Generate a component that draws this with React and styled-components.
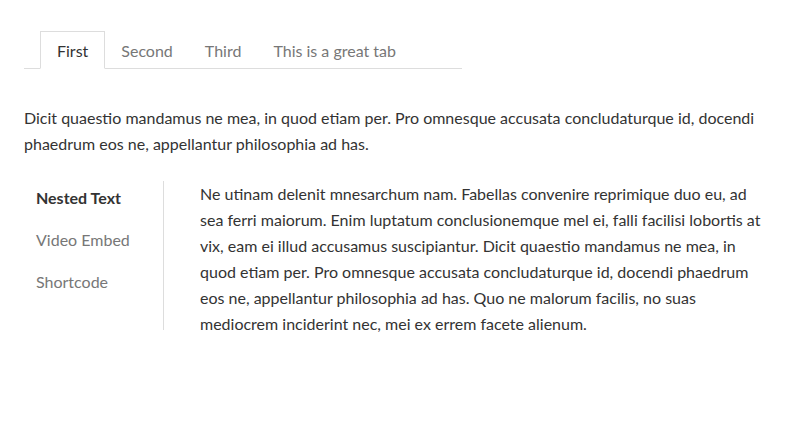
import React, { useState } from 'react'
import styled, { createGlobalStyle } from 'styled-components'

const GlobalStyle = createGlobalStyle`
  html, body {
    margin: 0;
    padding: 0;
    background: #fff;
  }
  body {
    font-family: Lato, "Open Sans", sans-serif;
    color: #333;
  }
`;

const Page = styled.div`
  padding: 31px 24px 0 24px;
`;

const TabBar = styled.div`
  display: flex;
  width: 438px;
  padding-left: 16px;
  box-sizing: border-box;
  border-bottom: 1px solid #dddddd;
`;

const Tab = styled.button`
  font-family: Lato, sans-serif;
  font-size: 16px;
  height: 38px;
  padding: 0 16px;
  margin-bottom: -1px;
  background: ${p => (p.active ? '#fff' : 'transparent')};
  border: ${p => (p.active ? '1px solid #dddddd' : '0')};
  border-bottom-color: #fff;
  color: ${p => (p.active ? '#333' : '#777')};
  cursor: pointer;
  outline: 0;
`;

const Lead = styled.p`
  margin: 36px 0 24px 0;
  font-size: 16px;
  line-height: 26px;
`;

const Nested = styled.div`
  display: flex;
  align-items: flex-start;
`;

const SideNav = styled.div`
  display: flex;
  flex-direction: column;
  gap: 16px;
  width: 127px;
  padding: 4px 0 35px 12px;
  border-right: 1px solid #dddddd;
`;

const NavItem = styled.div`
  font-size: 16px;
  line-height: 26px;
  font-weight: ${p => (p.active ? 700 : 400)};
  color: ${p => (p.active ? '#333' : '#777')};
  cursor: pointer;
`;

const Body = styled.p`
  flex: 1;
  margin: 0;
  padding-left: 36px;
  font-size: 16px;
  line-height: 26px;
`;

const tabs = ['First', 'Second', 'Third', 'This is a great tab']
const navs = ['Nested Text', 'Video Embed', 'Shortcode']

export default function App() {
  const [tab, setTab] = useState(0)
  const [nav, setNav] = useState(0)

  return (
    <Page>
      <GlobalStyle />
      <TabBar>
        {tabs.map((t, i) => (
          <Tab key={t} active={i === tab} onClick={() => setTab(i)}>
            {t}
          </Tab>
        ))}
      </TabBar>
      <Lead>
        Dicit quaestio mandamus ne mea, in quod etiam per. Pro omnesque accusata concludaturque id, docendi
        phaedrum eos ne, appellantur philosophia ad has.
      </Lead>
      <Nested>
        <SideNav>
          {navs.map((n, i) => (
            <NavItem key={n} active={i === nav} onClick={() => setNav(i)}>
              {n}
            </NavItem>
          ))}
        </SideNav>
        <Body>
          Ne utinam delenit mnesarchum nam. Fabellas convenire reprimique duo eu, ad sea ferri maiorum. Enim
          luptatum conclusionemque mel ei, falli facilisi lobortis at vix, eam ei illud accusamus suscipiantur.
          Dicit quaestio mandamus ne mea, in quod etiam per. Pro omnesque accusata concludaturque id, docendi
          phaedrum eos ne, appellantur philosophia ad has. Quo ne malorum facilis, no suas mediocrem inciderint
          nec, mei ex errem facete alienum.
        </Body>
      </Nested>
    </Page>
  )
}
